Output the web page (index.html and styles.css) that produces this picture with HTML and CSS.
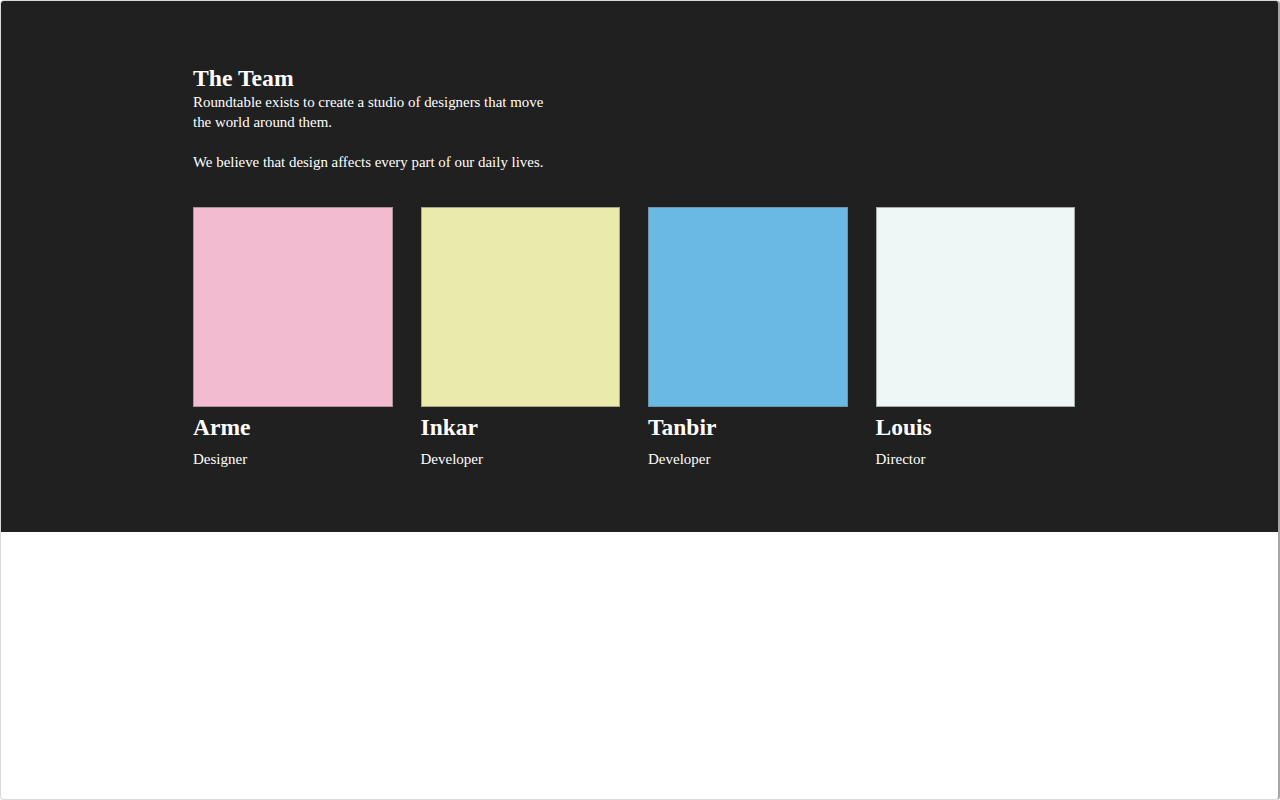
FILE: index.html
```html
<!DOCTYPE html>
<html lang="en">
<head>
<meta charset="utf-8">
<title>The Team</title>
<link rel="stylesheet" href="styles.css">
</head>
<body>
<div class="frame">
  <section class="team">
    <div class="inner">
      <h1 class="title">The Team</h1>
      <div class="intro">
        <p>Roundtable exists to create a studio of designers that move the world around them.</p>
        <p>We believe that design affects every part of our daily lives.</p>
      </div>
      <div class="members">
        <div class="member">
          <div class="photo pink"></div>
          <h2 class="name">Arme</h2>
          <p class="role">Designer</p>
        </div>
        <div class="member">
          <div class="photo yellow"></div>
          <h2 class="name">Inkar</h2>
          <p class="role">Developer</p>
        </div>
        <div class="member">
          <div class="photo blue"></div>
          <h2 class="name">Tanbir</h2>
          <p class="role">Developer</p>
        </div>
        <div class="member">
          <div class="photo white"></div>
          <h2 class="name">Louis</h2>
          <p class="role">Director</p>
        </div>
      </div>
    </div>
  </section>
</div>
</body>
</html>
```

FILE: styles.css
```css
html, body {
  margin: 0;
  padding: 0;
  background: #ffffff;
}

body {
  font-family: "Liberation Serif", "Times New Roman", serif;
  color: #ffffff;
}

.frame {
  box-sizing: border-box;
  width: 1280px;
  height: 800px;
  border: 1px solid #dadada;
  border-right: 2px solid #a6a6a6;
  border-radius: 4px;
  overflow: hidden;
  background: #ffffff;
}

.team {
  background: #202020;
  padding: 64px 0 63px;
}

.inner {
  width: 882px;
  margin-left: 192px;
}

.title {
  margin: 0 0 1px;
  font-size: 23.7px;
  font-weight: bold;
  line-height: 26px;
}

.intro {
  width: 360px;
  font-size: 14.9px;
  line-height: 20px;
}

.intro p {
  margin: 0 0 20px;
}

.intro p:last-child {
  margin-bottom: 0;
}

.members {
  display: grid;
  grid-template-columns: repeat(4, 199.5px);
  column-gap: 28px;
  margin-top: 35px;
}

.photo {
  box-sizing: border-box;
  width: 199.5px;
  height: 199.5px;
  border: 1px solid rgba(120, 120, 120, 0.6);
}

.pink { background: #f2bbcf; }
.yellow { background: #eaeaaa; }
.blue { background: #69b9e4; }
.white { background: #eef7f5; }

.name {
  margin: 7px 0 0;
  font-size: 23.5px;
  font-weight: bold;
  line-height: 26px;
}

.role {
  margin: 9px 0 0;
  font-size: 15px;
  line-height: 20px;
}
```
